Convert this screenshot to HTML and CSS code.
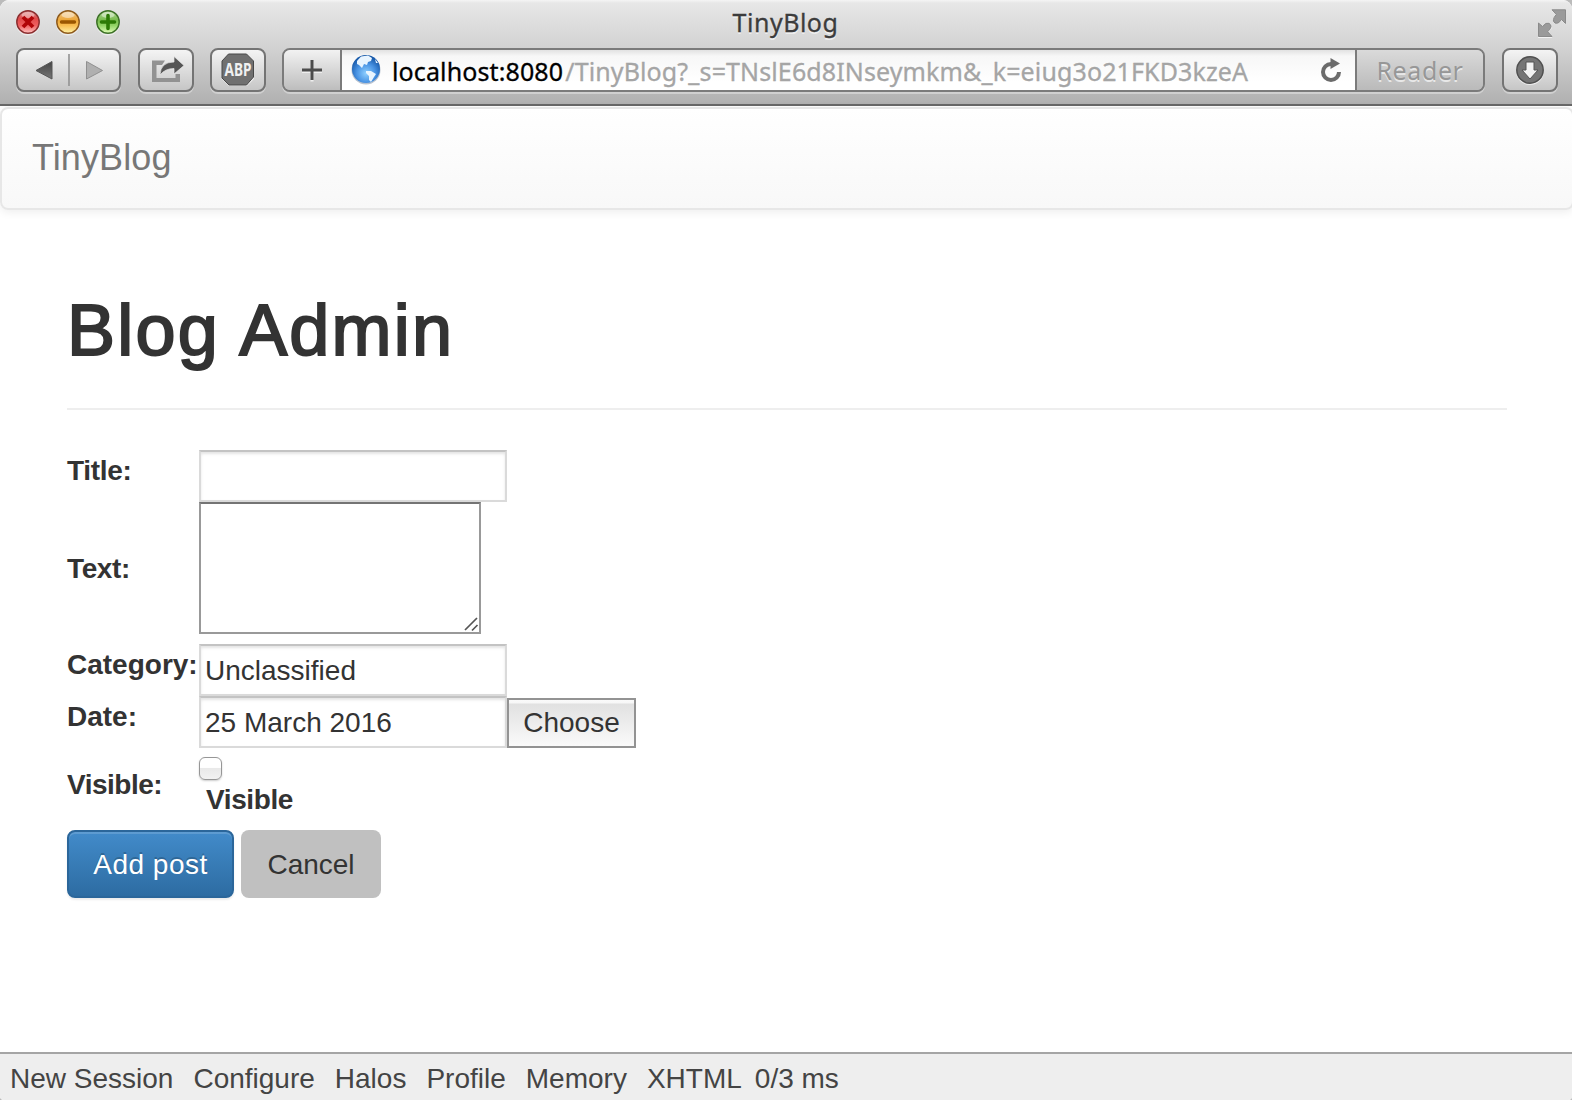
FILE: index.html
```
<!DOCTYPE html>
<html lang="en">
<head>
<meta charset="utf-8">
<title>TinyBlog</title>
<link rel="stylesheet" href="styles.css">
</head>
<body>
<div class="window">
  <header class="chrome">
    <div class="titlebar">
      <div class="lights">
        <svg width="24" height="26" viewBox="0 0 24 26"><defs>
          <linearGradient id="red" x2="0" y2="1"><stop offset="0" stop-color="#d98d8d"/><stop offset=".35" stop-color="#e24a4b"/><stop offset=".65" stop-color="#ef5f60"/><stop offset="1" stop-color="#ffc4c2"/></linearGradient>
          <linearGradient id="amber" x2="0" y2="1"><stop offset="0" stop-color="#efc88c"/><stop offset=".4" stop-color="#eda73a"/><stop offset=".65" stop-color="#f8bd50"/><stop offset="1" stop-color="#fff3a8"/></linearGradient>
          <linearGradient id="green" x2="0" y2="1"><stop offset="0" stop-color="#b5d79c"/><stop offset=".4" stop-color="#79bd50"/><stop offset=".65" stop-color="#91d365"/><stop offset="1" stop-color="#e0ffb8"/></linearGradient></defs>
          <circle cx="12" cy="13.5" r="12" fill="#fff" opacity=".5"/><circle cx="12" cy="12" r="11.2" fill="url(#red)" stroke="#8c2f30" stroke-width="1.5"/><ellipse cx="12" cy="5" rx="6.5" ry="3" fill="#fff" opacity=".4"/><path d="M7 7l10 10M17 7l-10 10" stroke="#b00508" stroke-width="3.800"/></svg>
        <svg width="24" height="26" viewBox="0 0 24 26"><circle cx="12" cy="13.5" r="12" fill="#fff" opacity=".5"/><circle cx="12" cy="12" r="11.200" fill="url(#amber)" stroke="#8f5b1d" stroke-width="1.5"/><ellipse cx="12" cy="5" rx="6.5" ry="3" fill="#fff" opacity=".45"/><path d="M5.500 12h13" stroke="#9b5700" stroke-width="3.400" stroke-linecap="round"/></svg>
        <svg width="24" height="26" viewBox="0 0 24 26"><circle cx="12" cy="13.5" r="12" fill="#fff" opacity=".5"/><circle cx="12" cy="12" r="11.200" fill="url(#green)" stroke="#3e7228" stroke-width="1.5"/><ellipse cx="12" cy="5" rx="6.5" ry="3" fill="#fff" opacity=".45"/><path d="M5.500 12h13M12 5.500v13" stroke="#2c7a06" stroke-width="3.600" stroke-linecap="round"/></svg>
      </div>
      <span class="window-title">TinyBlog</span>
      <svg class="expand" width="28" height="30" viewBox="0 0 28 30"><path d="M14 2H28V15.500L23.500 11.500L19 15L14 10.500L18.500 6zM0 15L4.500 18.500L9.500 14.500L14 19L10 24L14.500 29H0z" fill="#f2f2f2"/><path d="M14 .8H27.500V14.500L23.500 10.500Q20 15.500 17 14Q13 11.500 18.300 5.500zM.5 14L4.500 17.500Q8 13 11 14.300Q15.500 17 9.700 22.800L14 27.500H.5z" fill="#9a9a9a" stroke="#8a8a8a"/></svg>
    </div>
    <div class="toolbar">
      <div class="btn history"><svg width="102" height="40" viewBox="0 0 102 40"><defs><linearGradient id="dark" x2="0" y2="1"><stop stop-color="#444"/><stop offset="1" stop-color="#777"/></linearGradient></defs><path d="M18 20.500L34 11.500V29z" fill="url(#dark)" stroke="#555"/><path d="M51 4v32" stroke="#929292" stroke-width="1.600"/><path d="M84.500 20.500L68.500 11.500V29z" fill="#b0b0b0" stroke="#909090"/></svg></div>
      <div class="btn"><svg width="52" height="40" viewBox="0 0 52 40"><path d="M25 10.500H12V32H40V24H35.500V28H16.500V15H22z" fill="#929292"/><path d="M20 25Q20.500 12 34 12V6.500L44 15.500L34 24V18.500Q25 18.500 20 25z" fill="#555" stroke="#e8e8e8" stroke-width=".7"/></svg></div>
      <div class="btn abp"><svg width="52" height="40" viewBox="0 0 52 40"><path d="M16 4.500H36L42 11V29L35 36H17L10 29V11z" fill="#fff" opacity=".6"/><path d="M16.500 4H34.500L41.500 11V27L34.500 35H17L10 28V11z" fill="#707070" stroke="#484848"/><text x="26" y="26" text-anchor="middle" textLength="27" lengthAdjust="spacingAndGlyphs" class="abp-text">ABP</text></svg></div>
      <div class="address">
        <div class="add"><svg width="20" height="20" viewBox="0 0 20 20"><path d="M0 11.500h20M10 1.500v20" stroke="#eee" stroke-width="3"/><path d="M0 10h20M10 0v20" stroke="#4c4c4c" stroke-width="3"/></svg></div>
        <div class="field">
          <svg width="30" height="32" viewBox="0 0 30 32"><defs><radialGradient id="ocean" cx=".5" cy=".65" r=".6"><stop stop-color="#8fd0ff"/><stop offset=".55" stop-color="#4a94e4"/><stop offset="1" stop-color="#1759aa"/></radialGradient></defs><circle cx="15" cy="16" r="14.500" fill="#b9c3d0"/><circle cx="15" cy="15" r="14" fill="url(#ocean)"/><path d="M6 7L10 2.500L17 1.500L21 4L20 7L17 8L16 11L13 10L11 14L8 11L6 10zM15 17L20 17L25 20L23 23L20 28L18 26L18 22L15 19zM24 5L27 9L25 9z" fill="#e9f5ff"/></svg>
          <span class="url"><span class="host">localhost:8080</span><span class="path">/TinyBlog?_s=TNslE6d8INseymkm&amp;_k=eiug3o21FKD3kzeA</span></span>
          <svg class="reload" width="22" height="26" viewBox="0 0 22 26"><path d="M19 15A8 8 0 1 1 11 7" fill="none" stroke="#6b6b6b" stroke-width="4"/><path d="M10.500 1L20 6.500L10.500 12z" fill="#6b6b6b"/></svg>
        </div>
        <div class="reader">Reader</div>
      </div>
      <div class="btn"><svg width="52" height="40" viewBox="0 0 52 40"><circle cx="26" cy="21" r="14" fill="#fff" opacity=".6"/><circle cx="26" cy="20" r="13.200" fill="#757575" stroke="#505050" stroke-width="1.500"/><path d="M22 12H30V20H34L26 29L18 20H22z" fill="#f2f2f2" stroke="#555"/></svg></div>
    </div>
  </header>
  <nav class="navbar">TinyBlog</nav>
  <main class="page">
    <h1>Blog Admin</h1>
    <form>
      <div class="row"><label class="l-title">Title:</label><div class="input"></div></div>
      <div class="row row-text"><label class="l-text">Text:</label><div class="area"><svg width="16" height="16" viewBox="0 0 16 16"><path d="M2 14L14 2M9 14.500L14.500 9" stroke="#555" stroke-width="1.700"/></svg></div></div>
      <div class="row"><label class="l-cat">Category:</label><div class="input cat">Unclassified</div></div>
      <div class="row"><label class="l-date">Date:</label><div class="input">25 March 2016</div><div class="choose">Choose</div></div>
      <div class="row row-visible"><label class="l-visible">Visible:</label><div class="check"><i class="box"></i><b>Visible</b></div></div>
      <div class="actions"><div class="action primary">Add post</div><div class="action cancel">Cancel</div></div>
    </form>
  </main>
  <footer class="status"><span>New Session</span><span>Configure</span><span>Halos</span><span>Profile</span><span>Memory</span><span>XHTML</span><span class="timing">0/3 ms</span></footer>
</div>
</body>
</html>
```
FILE: styles.css
```
* { box-sizing: border-box; }
body { margin: 0; background: #bbb; font: 28px/32px "Liberation Sans", Arial, sans-serif; color: #333; }
svg { display: block; flex: none; overflow: visible; }
.window { width: 1572px; height: 1100px; display: flex; flex-direction: column; background: #fff; border-radius: 9px 9px 4px 4px; overflow: hidden; }
.chrome { height: 106px; flex: none; background: linear-gradient(#f5f5f5 0, #e7e7e7 3px, #d2d2d2 48px, #b0b0b0 104px); border-bottom: 2px solid #686868; font-family: "Noto Sans", sans-serif; }
.titlebar { height: 48px; display: grid; grid-template-columns: 104px 1fr 104px; padding: 0 6px 0 16px; }
.lights { display: flex; gap: 16px; padding-top: 10px; }
.window-title { font-size: 25px; line-height: 44px; text-align: center; color: #3c3c3c; text-shadow: 0 2px 0 #eee; letter-spacing: .5px; padding-right: 11px; -webkit-text-stroke: .3px #3c3c3c; }
.expand { margin-top: 9px; justify-self: end; }
.toolbar { display: flex; gap: 17px; padding: 0 14px 0 16px; }
.btn { width: 56px; height: 44px; flex: none; display: flex; justify-content: center; align-items: center; border: 2px solid #747474; border-radius: 8px; background: linear-gradient(#f4f4f4, #c6c6c6); box-shadow: 0 2px 0 rgba(255,255,255,.35); }
.btn + .btn { margin-right: -1px; }
.history { width: 105px; }
.abp-text { font: bold 18px "Noto Sans", sans-serif; fill: #f0f0f0; }
.address { flex: 1; height: 44px; display: flex; border: 2px solid #7b7b7b; border-radius: 8px; box-shadow: 0 2px 0 rgba(255,255,255,.35); }
.add { width: 56px; flex: none; display: flex; align-items: center; justify-content: center; border-radius: 6px 0 0 6px; background: linear-gradient(#f2f2f2, #bdbdbd); }
.field { flex: 1; display: flex; align-items: center; padding: 0 13px 0 9px; border-left: 2px solid #7b7b7b; border-right: 2px solid #7b7b7b; background: linear-gradient(#e2e2e2, #f7f7f7 6px, #fff 80%); }
.url { margin-left: 11px; padding-top: 1px; font-size: 25px; color: #000; white-space: nowrap; flex: 1; }
.host { letter-spacing: .12px; -webkit-text-stroke: .3px #000; }
.path { margin-left: 2px; color: #a5a5a5; letter-spacing: .12px; -webkit-text-stroke: .3px #a5a5a5; }
.reader { width: 126px; flex: none; text-align: center; font-size: 25px; line-height: 41px; letter-spacing: .6px; color: #979797; text-shadow: 0 2px 0 #e8e8e8; background: linear-gradient(#dadada, #bababa); border-radius: 0 6px 6px 0; }
.navbar { height: 103px; margin: 1px -2px 0 0; flex: none; border: 2px solid #e7e7e7; border-radius: 8px; padding: 29px 30px; font-size: 36px; line-height: 40px; letter-spacing: .1px; color: #777; background: linear-gradient(#fff, #f8f8f8); box-shadow: 0 2px 10px rgba(0,0,0,.075); }
.page { flex: 1; padding: 80px 65px 0 67px; }
h1 { margin: 0 0 40px; height: 120px; border-bottom: 2px solid #eee; font-size: 72px; line-height: 80px; font-weight: 400; letter-spacing: 2.2px; word-spacing: 1px; -webkit-text-stroke: 2px #333; }
.row { display: flex; align-items: flex-start; height: 52px; }
.row-text { height: 142px; }
.row-visible { height: 82px; }
label { width: 132px; flex: none; font-weight: bold; letter-spacing: -.4px; white-space: nowrap; }
.l-title { padding-top: 5px; letter-spacing: -.3px; }
.l-date { padding-top: 5px; letter-spacing: 0; }
.l-text { padding-top: 51px; }
.l-cat { padding-top: 5px; letter-spacing: 0; }
.l-visible { padding-top: 21px; letter-spacing: -.5px; }
.input { width: 308px; height: 52px; padding: 9px 4px; border: 2px solid #dadada; border-top-color: #c3c3c3; box-shadow: inset 0 2px 3px #e4e4e4; background: #fff; white-space: nowrap; }
.area { width: 282px; height: 132px; border: 2px solid #999; border-top-color: #747474; display: flex; justify-content: flex-end; align-items: flex-end; }
.choose { width: 129px; height: 50px; margin-top: 2px; padding-top: 7px; border: 2px solid #939393; text-align: center; background: linear-gradient(#fafafa 0, #f7f7f7 3px, #e1e1e1 4px, #fafafa); }
.check { display: flex; flex-direction: column; padding: 9px 0 0 0; }
.box { width: 23px; height: 23px; border: 1.5px solid #969696; border-radius: 6px; background: linear-gradient(#fff 45%, #e9e9e9 50%, #f2f2f2); box-shadow: 0 1px 2px #ccc; }
.check b { margin: 4px 0 0 7px; letter-spacing: -.4px; }
.actions { display: flex; gap: 7px; }
.action { height: 68px; border-radius: 8px; text-align: center; padding-top: 19px; width: 140px; }
.primary { width: 167px; padding-top: 17px; letter-spacing: .5px; color: #fff; border: 2px solid #2b669a; background: linear-gradient(#428bca, #2d6ca2); box-shadow: inset 0 2px 0 rgba(255,255,255,.15), 0 2px 2px rgba(0,0,0,.075); text-shadow: 0 -2px 0 rgba(0,0,0,.2); }
.cancel { background: #c0c0c0; }
.status { height: 48px; flex: none; border-top: 2px solid #a5a5a5; background: #eee; color: #444; display: flex; gap: 20px; padding: 9px 10px 0; white-space: nowrap; }
.timing { margin-left: -7px; }
```
